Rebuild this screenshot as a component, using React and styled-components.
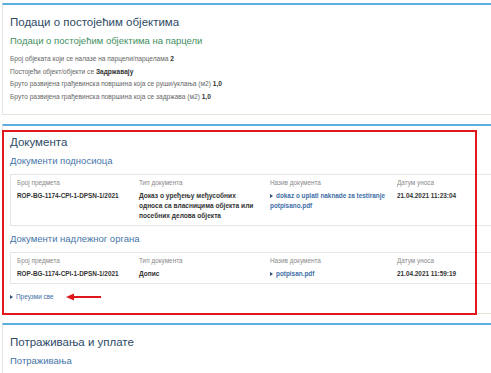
import React from "react";
import styled, { createGlobalStyle } from "styled-components";

const GlobalStyle = createGlobalStyle`
  html, body {
    margin: 0;
    padding: 0;
    background: #ffffff;
    overflow: hidden;
  }
  body {
    font-family: "Liberation Sans", Arial, sans-serif;
  }
`;

const submitterDocs = [
  {
    number: "ROP-BG-1174-CPI-1-DPSN-1/2021",
    type: "Доказ о уређењу међусобних\nодноса са власницима објекта или\nпосебних делова објекта",
    name: "dokaz o uplati naknade za testiranje potpisano.pdf",
    date: "21.04.2021 11:23:04",
  },
];

const authorityDocs = [
  {
    number: "ROP-BG-1174-CPI-1-DPSN-1/2021",
    type: "Допис",
    name: "potpisan.pdf",
    date: "21.04.2021 11:59:19",
  },
];

function DocTable({ rows }) {
  return rows.map((row) => (
    <DocCard key={row.name}>
      <Cell>
        <Label>Број предмета</Label>
        <Value>{row.number}</Value>
      </Cell>
      <Cell>
        <Label>Тип документа</Label>
        <Value $cyr>{row.type}</Value>
      </Cell>
      <Cell>
        <Label>Назив документа</Label>
        <DocLink href="#" $bold>
          {row.name}
        </DocLink>
      </Cell>
      <Cell>
        <Label>Датум уноса</Label>
        <Value>{row.date}</Value>
      </Cell>
    </DocCard>
  ));
}

export default function App() {
  return (
    <>
      <GlobalStyle />
      <Page>
        <Panel $pt={10} $pb={11}>
          <Title>Подаци о постојећим објектима</Title>
          <Subtitle $tone="green">Подаци о постојећим објектима на парцели</Subtitle>
          <Facts>
            <Fact>
              Број објеката који се налазе на парцели/парцелама <b>2</b>
            </Fact>
            <Fact>
              Постојећи објект/објекти се <b>Задржавају</b>
            </Fact>
            <Fact>
              Бруто развијена грађевинска површина која се руши/уклања (м2) <b>1,0</b>
            </Fact>
            <Fact>
              Бруто развијена грађевинска површина која се задржава (м2) <b>1,0</b>
            </Fact>
          </Facts>
        </Panel>

        <Panel $pt={9} $pb={11}>
          <Title>Документа</Title>
          <Subtitle>Документи подносиоца</Subtitle>
          <DocTable rows={submitterDocs} />
          <Subtitle $mt={7}>Документи надлежног органа</Subtitle>
          <DocTable rows={authorityDocs} />
          <DownloadAll href="#">Преузми све</DownloadAll>
          <Highlight />
          <Arrow width="38" height="10" viewBox="0 0 38 10">
            <path d="M36 5 H8" stroke="#e0171b" strokeWidth="2" />
            <path d="M1 5 L9 1.5 L9 8.5 Z" fill="#e0171b" />
          </Arrow>
        </Panel>

        <Panel $pt={10} $pb={10}>
          <Title>Потраживања и уплате</Title>
          <Subtitle>Потраживања</Subtitle>
        </Panel>
      </Page>
    </>
  );
}

const Page = styled.div`
  width: 540px;
  padding: 3px 0 0 2px;
  display: flex;
  flex-direction: column;
  gap: 9px;
`;

const Panel = styled.section`
  position: relative;
  background: #fff;
  border-top: 2px solid #5eaee0;
  border-left: 1px solid #e4e4e4;
  border-bottom: 1px solid #e8e4dc;
  padding: ${(p) => p.$pt}px 8px ${(p) => p.$pb}px 7px;
  display: flex;
  flex-direction: column;
`;

const Title = styled.h2`
  margin: 0;
  font-size: 11.5px;
  line-height: 14px;
  font-weight: normal;
  color: #2e4a66;
`;

const Subtitle = styled.h3`
  margin: ${(p) => p.$mt ?? 6}px 0 0;
  font-size: 9.5px;
  line-height: 12px;
  font-weight: normal;
  color: ${(p) => (p.$tone === "green" ? "#3f8f5e" : "#4675a8")};
`;

const Facts = styled.div`
  margin-top: 6px;
  display: flex;
  flex-direction: column;
`;

const Fact = styled.div`
  font-size: 6.6px;
  line-height: 12.5px;
  color: #666;

  b {
    color: #333;
  }
`;

const DocCard = styled.div`
  margin-top: 7px;
  border: 1px solid #e6e6e6;
  padding: 4px 0 4px 6px;
  display: grid;
  grid-template-columns: 122px 131px 127px 1fr;
`;

const Cell = styled.div`
  display: flex;
  flex-direction: column;
  gap: 4px;
  padding-right: 4px;
`;

const Label = styled.div`
  font-size: 6.4px;
  line-height: 8px;
  color: #8a8a8a;
`;

const Value = styled.div`
  font-size: ${(p) => (p.$cyr ? 6.6 : 6.4)}px;
  white-space: pre-line;
  line-height: 10px;
  font-weight: bold;
  color: #333;
`;

const DocLink = styled.a`
  font-size: 6.4px;
  line-height: 10px;
  font-weight: ${(p) => (p.$bold ? "bold" : "normal")};
  color: #3d6ea6;
  text-decoration: none;

  &::before {
    content: "";
    display: inline-block;
    margin: 0 3px 0 0;
    vertical-align: 0;
    border-left: 3px solid #2d4f7a;
    border-top: 2px solid transparent;
    border-bottom: 2px solid transparent;
  }
`;

const DownloadAll = styled(DocLink)`
  margin-top: 8px;
  align-self: flex-start;
`;

const Highlight = styled.div`
  position: absolute;
  top: 4px;
  left: -1px;
  width: 471px;
  bottom: -2px;
  border: 2px solid #e0171b;
  pointer-events: none;
`;

const Arrow = styled.svg`
  position: absolute;
  left: 62px;
  bottom: 11px;
`;
